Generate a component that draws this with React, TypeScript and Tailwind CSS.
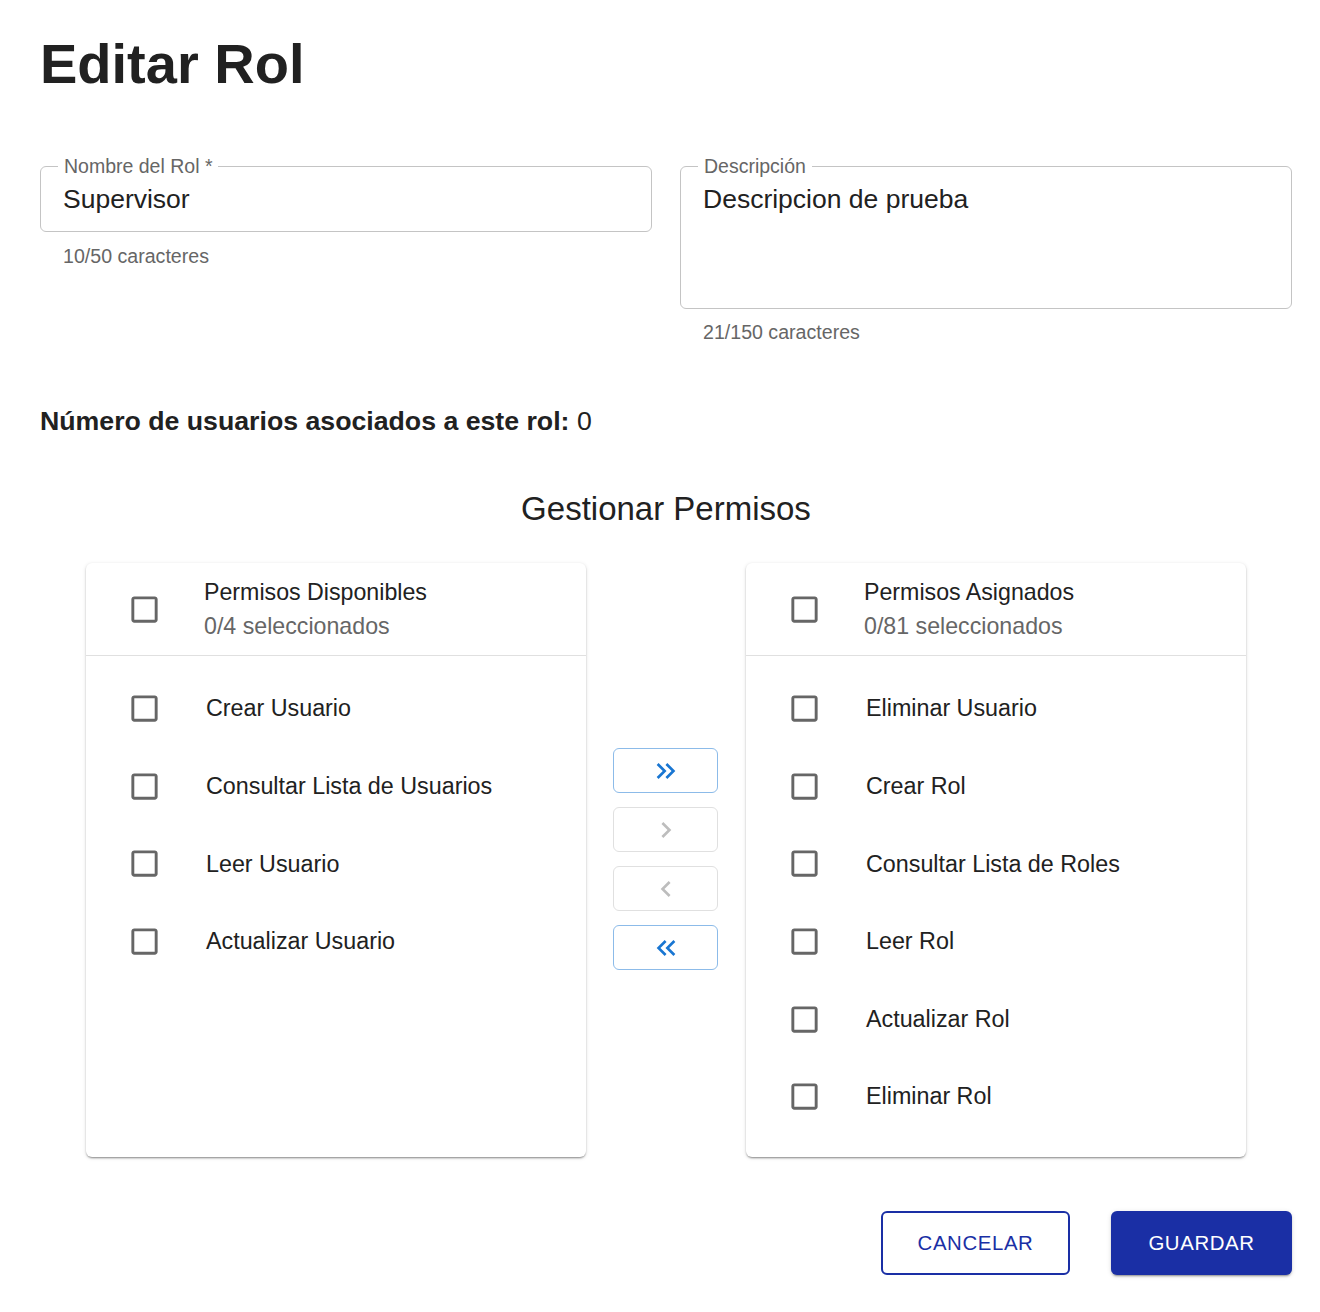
import React from "react";

const AVAILABLE = ["Crear Usuario", "Consultar Lista de Usuarios", "Leer Usuario", "Actualizar Usuario"];
const ASSIGNED = ["Eliminar Usuario", "Crear Rol", "Consultar Lista de Roles", "Leer Rol", "Actualizar Rol", "Eliminar Rol"];

function CheckboxIcon() {
  return (
    <svg viewBox="0 0 24 24" className="w-[35px] h-[35px] shrink-0 fill-[#666666]">
      <path d="M19 5v14H5V5h14m0-2H5c-1.11 0-2 .9-2 2v14c0 1.1.89 2 2 2h14c1.1 0 2-.9 2-2V5c0-1.1-.9-2-2-2z" />
    </svg>
  );
}

function PermissionList({ title, subtitle, items }: { title: string; subtitle: string; items: string[] }) {
  return (
    <div className="w-[500px] h-[594px] bg-white rounded-[6px] overflow-hidden shadow-[0_2px_2px_-1px_rgba(0,0,0,0.3),0_1px_2px_0_rgba(0,0,0,0.14),0_1px_4px_0_rgba(0,0,0,0.12)]">
      {/* Header */}
      <div className="h-[93px] flex items-center pl-[41px] border-b border-[#e0e0e0]">
        <CheckboxIcon />
        <div className="ml-[42px] flex flex-col">
          <span className="text-[23.2px] leading-[34px] text-[#212121]">{title}</span>
          <span className="text-[23.2px] leading-[34px] text-[#666666]">{subtitle}</span>
        </div>
      </div>
      {/* Items */}
      <div className="pt-[14px] flex flex-col">
        {items.map((item) => (
          <div key={item} className="h-[77.6px] flex items-center pl-[41px]">
            <CheckboxIcon />
            <span className="ml-[44px] text-[23.3px] text-[#212121]">{item}</span>
          </div>
        ))}
      </div>
    </div>
  );
}

function MoveButton({ enabled, path }: { enabled: boolean; path: string }) {
  return (
    <button
      className={`w-[105px] h-[45px] rounded-[6px] border flex items-center justify-center bg-white ${
        enabled ? "border-[#8cbbe9]" : "border-[#e0e0e0]"
      }`}
    >
      <svg viewBox="0 0 24 24" className={`w-[32px] h-[32px] ${enabled ? "fill-[#1976d2]" : "fill-[#bdbdbd]"}`}>
        <path d={path} />
      </svg>
    </button>
  );
}

export default function App() {
  return (
    <div className="w-[1320px] h-[1312px] bg-white pl-[40px] pr-[28px] pt-[36px] font-['Liberation_Sans',Arial,sans-serif] text-[#212121]">
      <h1 className="text-[56px] leading-[56px] font-bold">Editar Rol</h1>

      {/* Fields */}
      <div className="mt-[74px] grid grid-cols-2 gap-[28px] items-start">
        <div>
          <div className="relative h-[66px] rounded-[6px] border border-[#c4c4c4] flex items-center pl-[22px]">
            <span className="absolute -top-[13px] left-[17px] bg-white px-[6px] text-[19.5px] leading-[24px] text-[#666666]">
              Nombre del Rol *
            </span>
            <span className="text-[26.5px] leading-[32px]">Supervisor</span>
          </div>
          <p className="mt-[12px] pl-[23px] text-[19.6px] leading-[24px] text-[#666666]">10/50 caracteres</p>
        </div>
        <div>
          <div className="relative h-[143px] rounded-[6px] border border-[#c4c4c4] pl-[22px] pt-[16px]">
            <span className="absolute -top-[13px] left-[17px] bg-white px-[6px] text-[19.5px] leading-[24px] text-[#666666]">
              Descripción
            </span>
            <span className="text-[26.5px] leading-[32px]">Descripcion de prueba</span>
          </div>
          <p className="mt-[11px] pl-[23px] text-[19.6px] leading-[24px] text-[#666666]">21/150 caracteres</p>
        </div>
      </div>

      <p className="mt-[61px] text-[26.7px] leading-[32px]">
        <span className="font-bold">Número de usuarios asociados a este rol:</span> 0
      </p>

      <h2 className="mt-[52px] text-center text-[33px] leading-[40px]">Gestionar Permisos</h2>

      {/* Transfer list */}
      <div className="mt-[34px] flex items-center justify-center">
        <PermissionList title="Permisos Disponibles" subtitle="0/4 seleccionados" items={AVAILABLE} />
        <div className="ml-[27px] mr-[28px] flex flex-col gap-[14px] -mt-[2px]">
          <MoveButton enabled path="M6.41 6 5 7.41 9.58 12 5 16.59 6.41 18l6-6z M13 6l-1.41 1.41L16.17 12l-4.58 4.59L13 18l6-6z" />
          <MoveButton enabled={false} path="M8.59 16.59 13.17 12 8.59 7.41 10 6l6 6-6 6z" />
          <MoveButton enabled={false} path="M15.41 16.59 10.83 12l4.58-4.59L14 6l-6 6 6 6z" />
          <MoveButton enabled path="M17.59 18 19 16.59 14.42 12 19 7.41 17.59 6l-6 6z M11 18l1.41-1.41L7.83 12l4.58-4.59L11 6l-6 6z" />
        </div>
        <PermissionList title="Permisos Asignados" subtitle="0/81 seleccionados" items={ASSIGNED} />
      </div>

      {/* Actions */}
      <div className="mt-[54px] flex justify-end gap-[41px]">
        <button className="w-[189px] h-[64px] rounded-[6px] border-2 border-[#1a2fa5] text-[#1a2fa5] text-[20.4px] tracking-[0.6px]">
          CANCELAR
        </button>
        <button className="w-[181px] h-[64px] rounded-[6px] bg-[#1a2fa5] text-white text-[20.4px] tracking-[0.6px] shadow-[0_3px_1px_-2px_rgba(0,0,0,0.2),0_2px_2px_0_rgba(0,0,0,0.14),0_1px_5px_0_rgba(0,0,0,0.12)]">
          GUARDAR
        </button>
      </div>
    </div>
  );
}
